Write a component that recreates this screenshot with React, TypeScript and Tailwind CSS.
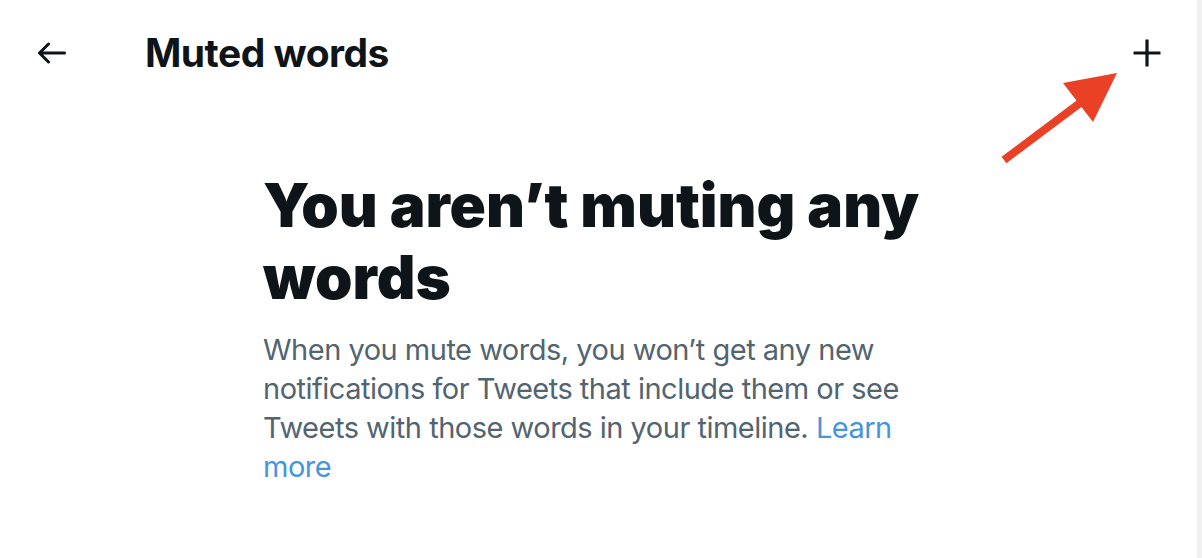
export default function App() {
  return (
    <div className="relative flex h-[558px] w-[1202px] overflow-hidden bg-white" style={{ fontFamily: 'Inter, "Liberation Sans", sans-serif' }}>
      <main className="flex-1">
        <header className="flex h-[106px] items-center pl-[37px] pr-[35px]">
          <svg viewBox="0 0 29 22" className="h-[22px] w-[29px]" fill="none" stroke="#0f1419" strokeWidth="3" strokeLinecap="round" strokeLinejoin="round">
            <path d="M27.5 11H2.5M11.5 2L2.5 11l9 9" />
          </svg>
          <h2 className="ml-[79px] flex-1 text-[39px] font-bold tracking-[-0.5px] text-[#0f1419]">Muted words</h2>
          <svg viewBox="0 0 30 30" className="h-[30px] w-[30px]" fill="none" stroke="#0f1419" strokeWidth="3.2">
            <path d="M15 1.5v27M1.5 15h27" />
          </svg>
        </header>

        <section className="ml-[263px] mt-[63px] w-[660px]">
          <h1 className="text-[60px] font-black leading-[72px] text-[#0f1419]">You aren’t muting any words</h1>
          <p className="mt-[17px] text-[29px] leading-[39px] tracking-[-0.5px] text-[#536471]">
            When you mute words, you won’t get any new notifications for Tweets that include them or see Tweets with those words in your timeline.{' '}
            <a className="text-[#4695dc]">Learn more</a>
          </p>
        </section>
      </main>
      <div className="w-[5px] bg-[#f0f0f0]" />

      {/* annotation arrow over the page */}
      <svg className="pointer-events-none absolute left-0 top-0" width="1202" height="558" viewBox="0 0 1202 558">
        <line x1="1004" y1="160" x2="1080" y2="103" stroke="#ea4025" strokeWidth="8" />
        <polygon points="1117,73 1063,83 1093,122" fill="#ea4025" />
      </svg>
    </div>
  )
}
